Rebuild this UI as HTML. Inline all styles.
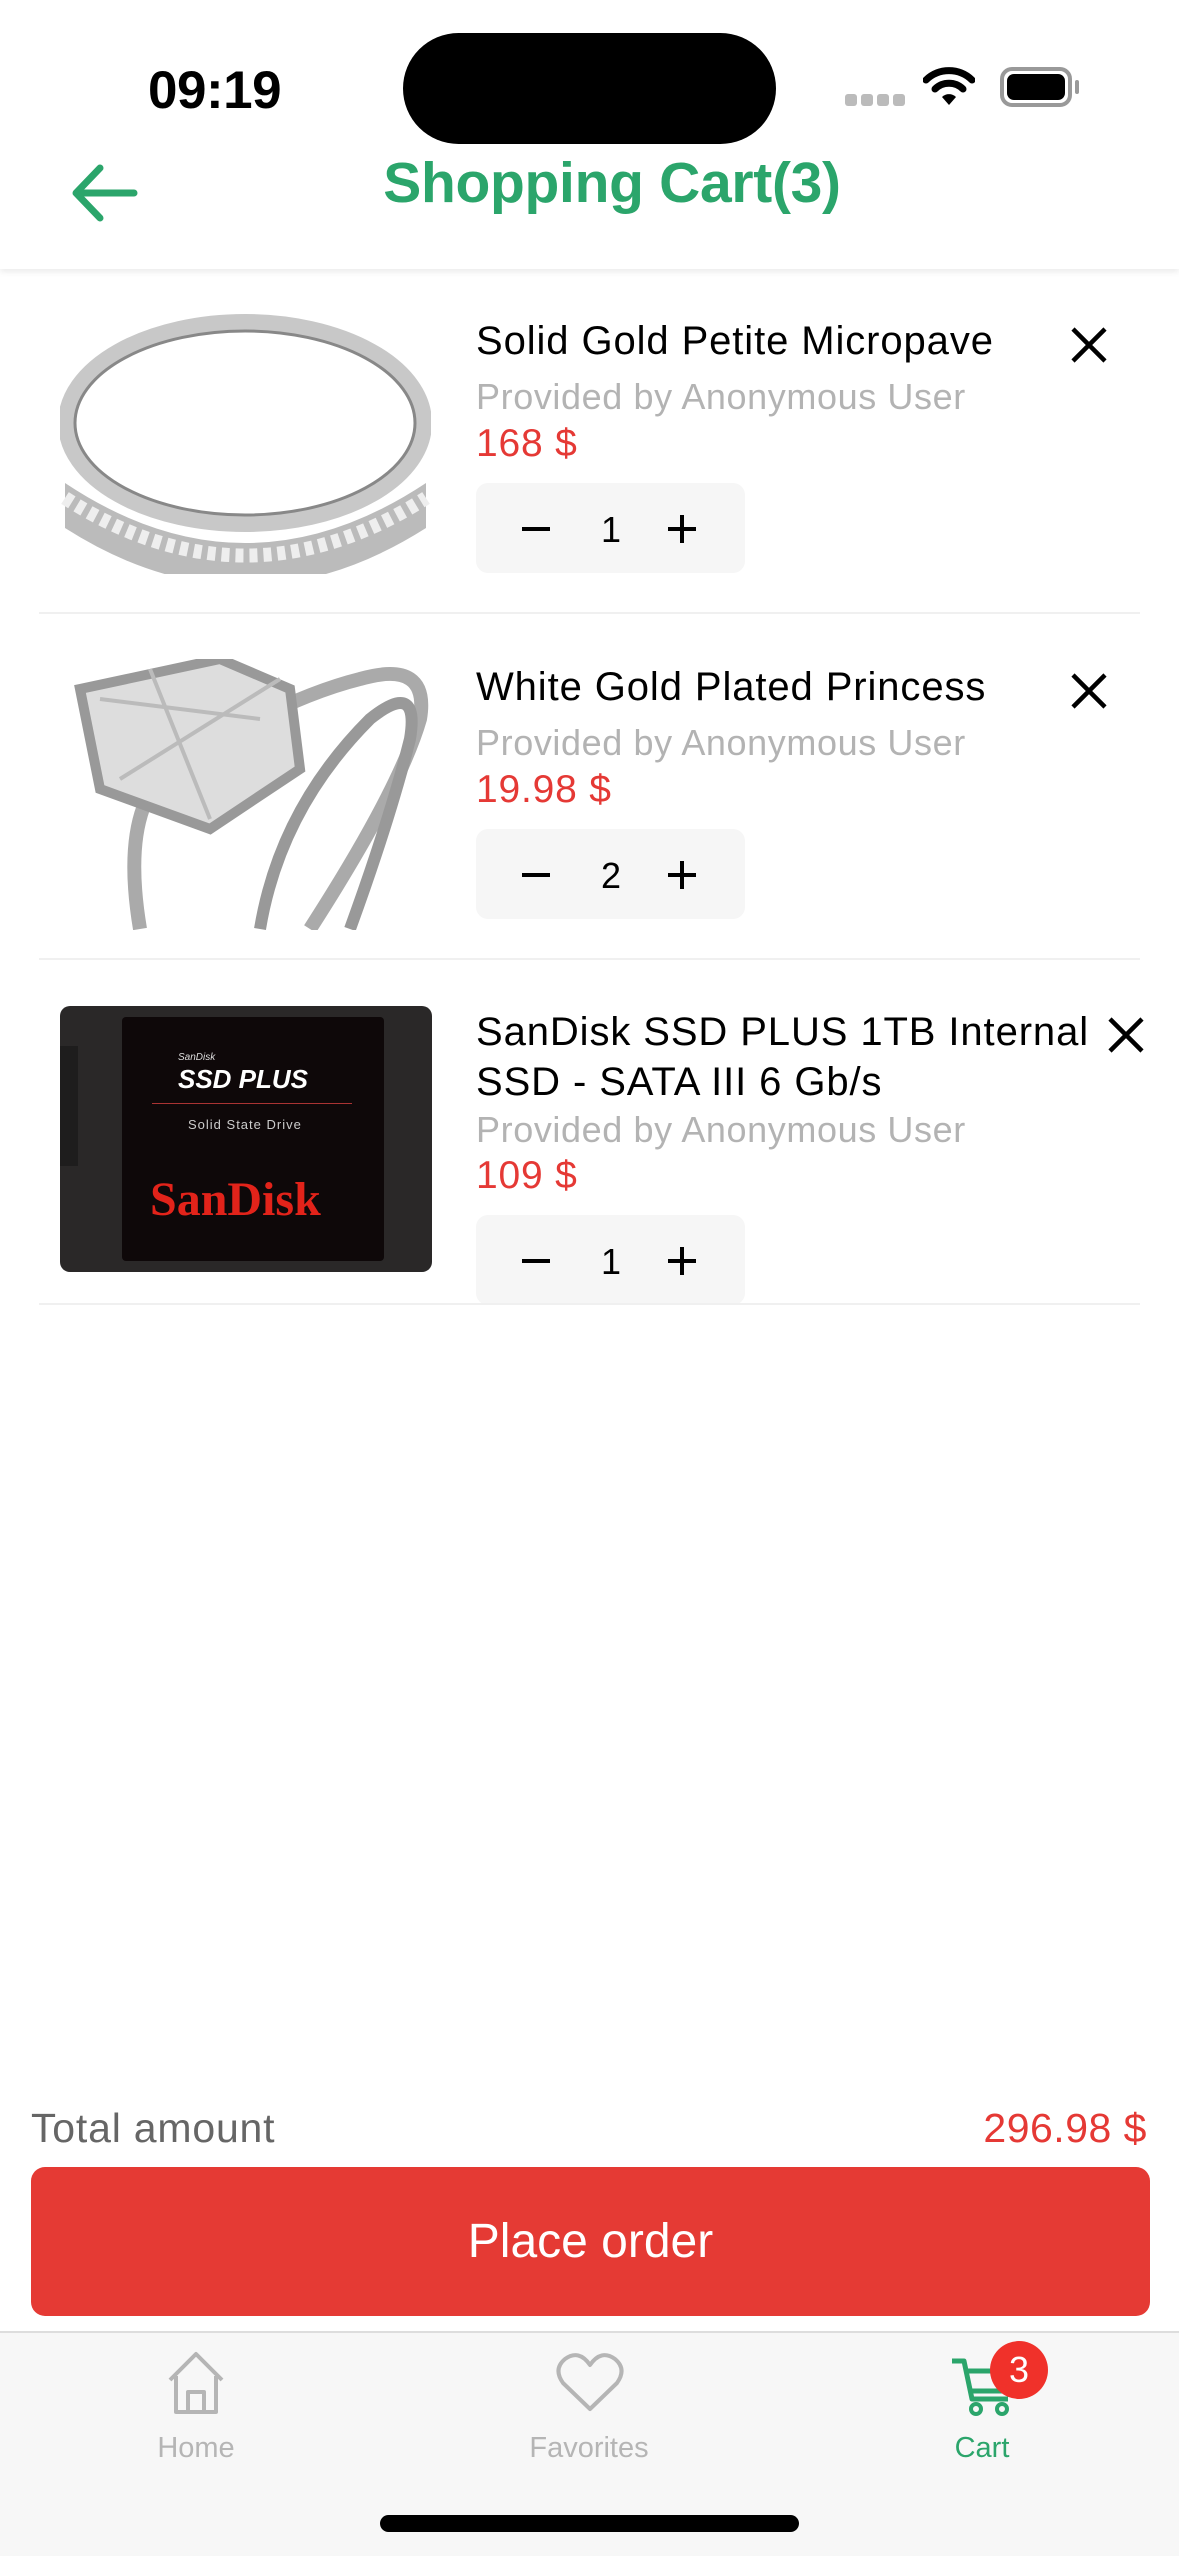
<!DOCTYPE html>
<html><head><meta charset="utf-8"><style>
*{margin:0;padding:0;box-sizing:border-box}
body{width:1179px;height:2556px;position:relative;background:#fff;font-family:"Liberation Sans",sans-serif;overflow:hidden}
.a{position:absolute;white-space:nowrap}
.t{font-size:40px;color:#000;line-height:1;letter-spacing:0.9px}
.p{font-size:36px;color:#b3b3b3;line-height:1;letter-spacing:0.6px}
.r{font-size:39px;color:#e53935;line-height:1;letter-spacing:0.8px}
.st{position:absolute;width:269px;height:90px;background:#f6f6f6;border-radius:12px}
.st span{position:absolute;top:29px;font-size:36px;line-height:1}
.st svg{position:absolute;top:30px}
.div{position:absolute;left:39px;width:1101px;height:2px;background:#f0f0f0}
</style></head><body>
<div class="a" style="left:148px;top:60px;font-size:53px;font-weight:bold;letter-spacing:-0.5px">09:19</div>
<div class="a" style="left:403px;top:33px;width:373px;height:111px;background:#000;border-radius:56px"></div>
<div class="a" style="left:845px;top:94px;width:60px;height:12px">
<div style="position:absolute;left:0;width:12px;height:12px;background:#bbb;border-radius:3px"></div>
<div style="position:absolute;left:16px;width:12px;height:12px;background:#bbb;border-radius:3px"></div>
<div style="position:absolute;left:32px;width:12px;height:12px;background:#bbb;border-radius:3px"></div>
<div style="position:absolute;left:48px;width:12px;height:12px;background:#bbb;border-radius:3px"></div>
</div>
<svg class="a" style="left:923px;top:66px" width="52" height="40" viewBox="0 0 52 40"><path d="M3 14 A33 33 0 0 1 49 14" stroke="#000" stroke-width="7" fill="none" stroke-linecap="round"/><path d="M12 23 A20 20 0 0 1 40 23" stroke="#000" stroke-width="7" fill="none" stroke-linecap="round"/><path d="M19 31 L26 39 L33 31 A10 10 0 0 0 19 31Z" fill="#000"/></svg>
<div class="a" style="left:1000px;top:67px;width:72px;height:40px;border:4px solid #999;border-radius:12px"><div style="position:absolute;left:3px;top:3px;right:3px;bottom:3px;background:#000;border-radius:7px"></div></div>
<div class="a" style="left:1075px;top:80px;width:4px;height:14px;background:#999;border-radius:2px"></div>
<div class="a" style="left:0;top:0;width:1179px;height:269px;box-shadow:0 3px 6px rgba(0,0,0,0.08)"></div>
<svg class="a" style="left:68px;top:160px" width="72" height="64" viewBox="0 0 72 64"><path d="M66 33 H10 M32 8 L8 33 L32 58" stroke="#2ba56b" stroke-width="7" fill="none" stroke-linecap="round" stroke-linejoin="round"/></svg>
<div class="a" style="left:0;width:1224px;text-align:center;top:155px;font-size:57px;color:#2ba56b;font-weight:bold;letter-spacing:-0.3px;line-height:1">Shopping Cart(3)</div>

<svg class="a" style="left:60px;top:313px" width="371" height="261" viewBox="0 0 371 261">
<ellipse cx="185" cy="110" rx="178" ry="100" fill="none" stroke="#c8c8c8" stroke-width="18"/>
<ellipse cx="185" cy="110" rx="170" ry="92" fill="none" stroke="#888" stroke-width="3"/>
<path d="M5 170 Q185 290 366 170 L366 215 Q185 330 5 215Z" fill="#bbb"/>
<path d="M5 185 Q185 300 366 185" stroke="#eee" stroke-width="14" fill="none" stroke-dasharray="8 6"/>
</svg>
<div class="a t" style="left:476px;top:321px">Solid Gold Petite Micropave</div>
<div class="a p" style="left:476px;top:379px">Provided by Anonymous User</div>
<div class="a r" style="left:476px;top:424px">168 $</div>
<div class="st" style="left:476px;top:483px"><svg style="left:44px" width="32" height="32"><path d="M2 16H30" stroke="#000" stroke-width="4"/></svg><span style="left:125px">1</span><svg style="left:190px" width="32" height="32"><path d="M2 16H30M16 2V30" stroke="#000" stroke-width="4"/></svg></div>
<svg class="a" style="left:1069px;top:325px" width="40" height="40"><path d="M4 4L36 36M36 4L4 36" stroke="#000" stroke-width="4.5"/></svg>
<div class="div" style="top:612px"></div>

<svg class="a" style="left:60px;top:659px" width="371" height="271" viewBox="0 0 371 271">
<path d="M80 270 Q60 150 110 110 Q220 40 300 20 Q370 0 360 60 Q340 130 250 270" fill="none" stroke="#aaa" stroke-width="14"/>
<path d="M200 270 Q220 150 310 60 Q360 20 350 80 Q330 160 290 270" fill="none" stroke="#999" stroke-width="12"/>
<path d="M20 30 L160 0 L230 30 L240 110 L150 170 L40 130Z" fill="#ddd" stroke="#999" stroke-width="10"/>
<path d="M40 40 L200 60 M90 10 L150 160 M60 120 L220 20" stroke="#bbb" stroke-width="4"/>
</svg>
<div class="a t" style="left:476px;top:667px">White Gold Plated Princess</div>
<div class="a p" style="left:476px;top:725px">Provided by Anonymous User</div>
<div class="a r" style="left:476px;top:770px">19.98 $</div>
<div class="st" style="left:476px;top:829px"><svg style="left:44px" width="32" height="32"><path d="M2 16H30" stroke="#000" stroke-width="4"/></svg><span style="left:125px">2</span><svg style="left:190px" width="32" height="32"><path d="M2 16H30M16 2V30" stroke="#000" stroke-width="4"/></svg></div>
<svg class="a" style="left:1069px;top:671px" width="40" height="40"><path d="M4 4L36 36M36 4L4 36" stroke="#000" stroke-width="4.5"/></svg>
<div class="div" style="top:958px"></div>

<div class="a" style="left:60px;top:1006px;width:372px;height:266px;background:#2a2828;border-radius:10px"></div>
<div class="a" style="left:60px;top:1046px;width:18px;height:120px;background:#1e1d1d"></div>
<div class="a" style="left:122px;top:1017px;width:262px;height:244px;background:#0e0809;border-radius:4px"></div>
<div class="a" style="left:178px;top:1052px;font-size:10px;color:#ddd;font-style:italic">SanDisk</div>
<div class="a" style="left:178px;top:1064px;font-size:26px;color:#fff;font-style:italic;font-weight:bold">SSD PLUS</div>
<div class="a" style="left:152px;top:1103px;width:200px;height:1px;background:#a33"></div>
<div class="a" style="left:188px;top:1117px;font-size:13px;color:#ccc;letter-spacing:1px">Solid State Drive</div>
<div class="a" style="left:150px;top:1172px;font-size:48px;color:#e2231a;font-family:'Liberation Serif',serif;font-weight:bold">SanDisk</div>
<div class="a t" style="left:476px;top:1012px">SanDisk SSD PLUS 1TB Internal</div>
<div class="a t" style="left:476px;top:1062px">SSD - SATA III 6 Gb/s</div>
<div class="a p" style="left:476px;top:1112px">Provided by Anonymous User</div>
<div class="a r" style="left:476px;top:1156px">109 $</div>
<div class="st" style="left:476px;top:1215px"><svg style="left:44px" width="32" height="32"><path d="M2 16H30" stroke="#000" stroke-width="4"/></svg><span style="left:125px">1</span><svg style="left:190px" width="32" height="32"><path d="M2 16H30M16 2V30" stroke="#000" stroke-width="4"/></svg></div>
<svg class="a" style="left:1106px;top:1015px" width="40" height="40"><path d="M4 4L36 36M36 4L4 36" stroke="#000" stroke-width="4.5"/></svg>
<div class="div" style="top:1303px"></div>

<div class="a" style="left:31px;top:2105px;font-size:41px;color:#666;letter-spacing:0.8px">Total amount</div>
<div class="a" style="right:32px;top:2105px;font-size:41px;color:#e53935;letter-spacing:0.5px">296.98 $</div>
<div class="a" style="left:31px;top:2167px;width:1119px;height:149px;background:#e53a34;border-radius:14px;color:#fff;font-size:48px;text-align:center;line-height:149px">Place order</div>

<div class="a" style="left:0;top:2331px;width:1179px;height:225px;background:#f7f7f7;border-top:2px solid #ddd"></div>
<svg class="a" style="left:164px;top:2350px" width="64" height="66" viewBox="0 0 64 66"><path d="M6 30 L32 4 L58 30 M12 26 V62 H52 V26 M24 62 V42 H40 V62" stroke="#b5b5b5" stroke-width="4" fill="none" stroke-linejoin="round"/></svg>
<div class="a" style="left:0;width:392px;text-align:center;top:2432px;font-size:29px;color:#b5b5b5">Home</div>
<svg class="a" style="left:555px;top:2351px" width="70" height="62" viewBox="0 0 70 62"><path d="M35 58 L8 32 Q-2 18 10 8 Q24 -2 35 14 Q46 -2 60 8 Q72 18 62 32Z" stroke="#b5b5b5" stroke-width="4" fill="none" stroke-linejoin="round"/></svg>
<div class="a" style="left:393px;width:392px;text-align:center;top:2432px;font-size:29px;color:#b5b5b5">Favorites</div>
<svg class="a" style="left:950px;top:2355px" width="68" height="64" viewBox="0 0 68 64"><path d="M2 6 H14 L22 44 H58 M16 16 H64 L58 36 H20" stroke="#2ba56b" stroke-width="5" fill="none" stroke-linejoin="round"/><circle cx="26" cy="54" r="5" stroke="#2ba56b" stroke-width="4" fill="none"/><circle cx="52" cy="54" r="5" stroke="#2ba56b" stroke-width="4" fill="none"/></svg>
<div class="a" style="left:990px;top:2341px;width:58px;height:58px;border-radius:50%;background:#f0312a;color:#fff;font-size:36px;text-align:center;line-height:58px">3</div>
<div class="a" style="left:786px;width:392px;text-align:center;top:2432px;font-size:29px;color:#2ba56b">Cart</div>
<div class="a" style="left:380px;top:2515px;width:419px;height:17px;background:#000;border-radius:9px"></div>
</body></html>
